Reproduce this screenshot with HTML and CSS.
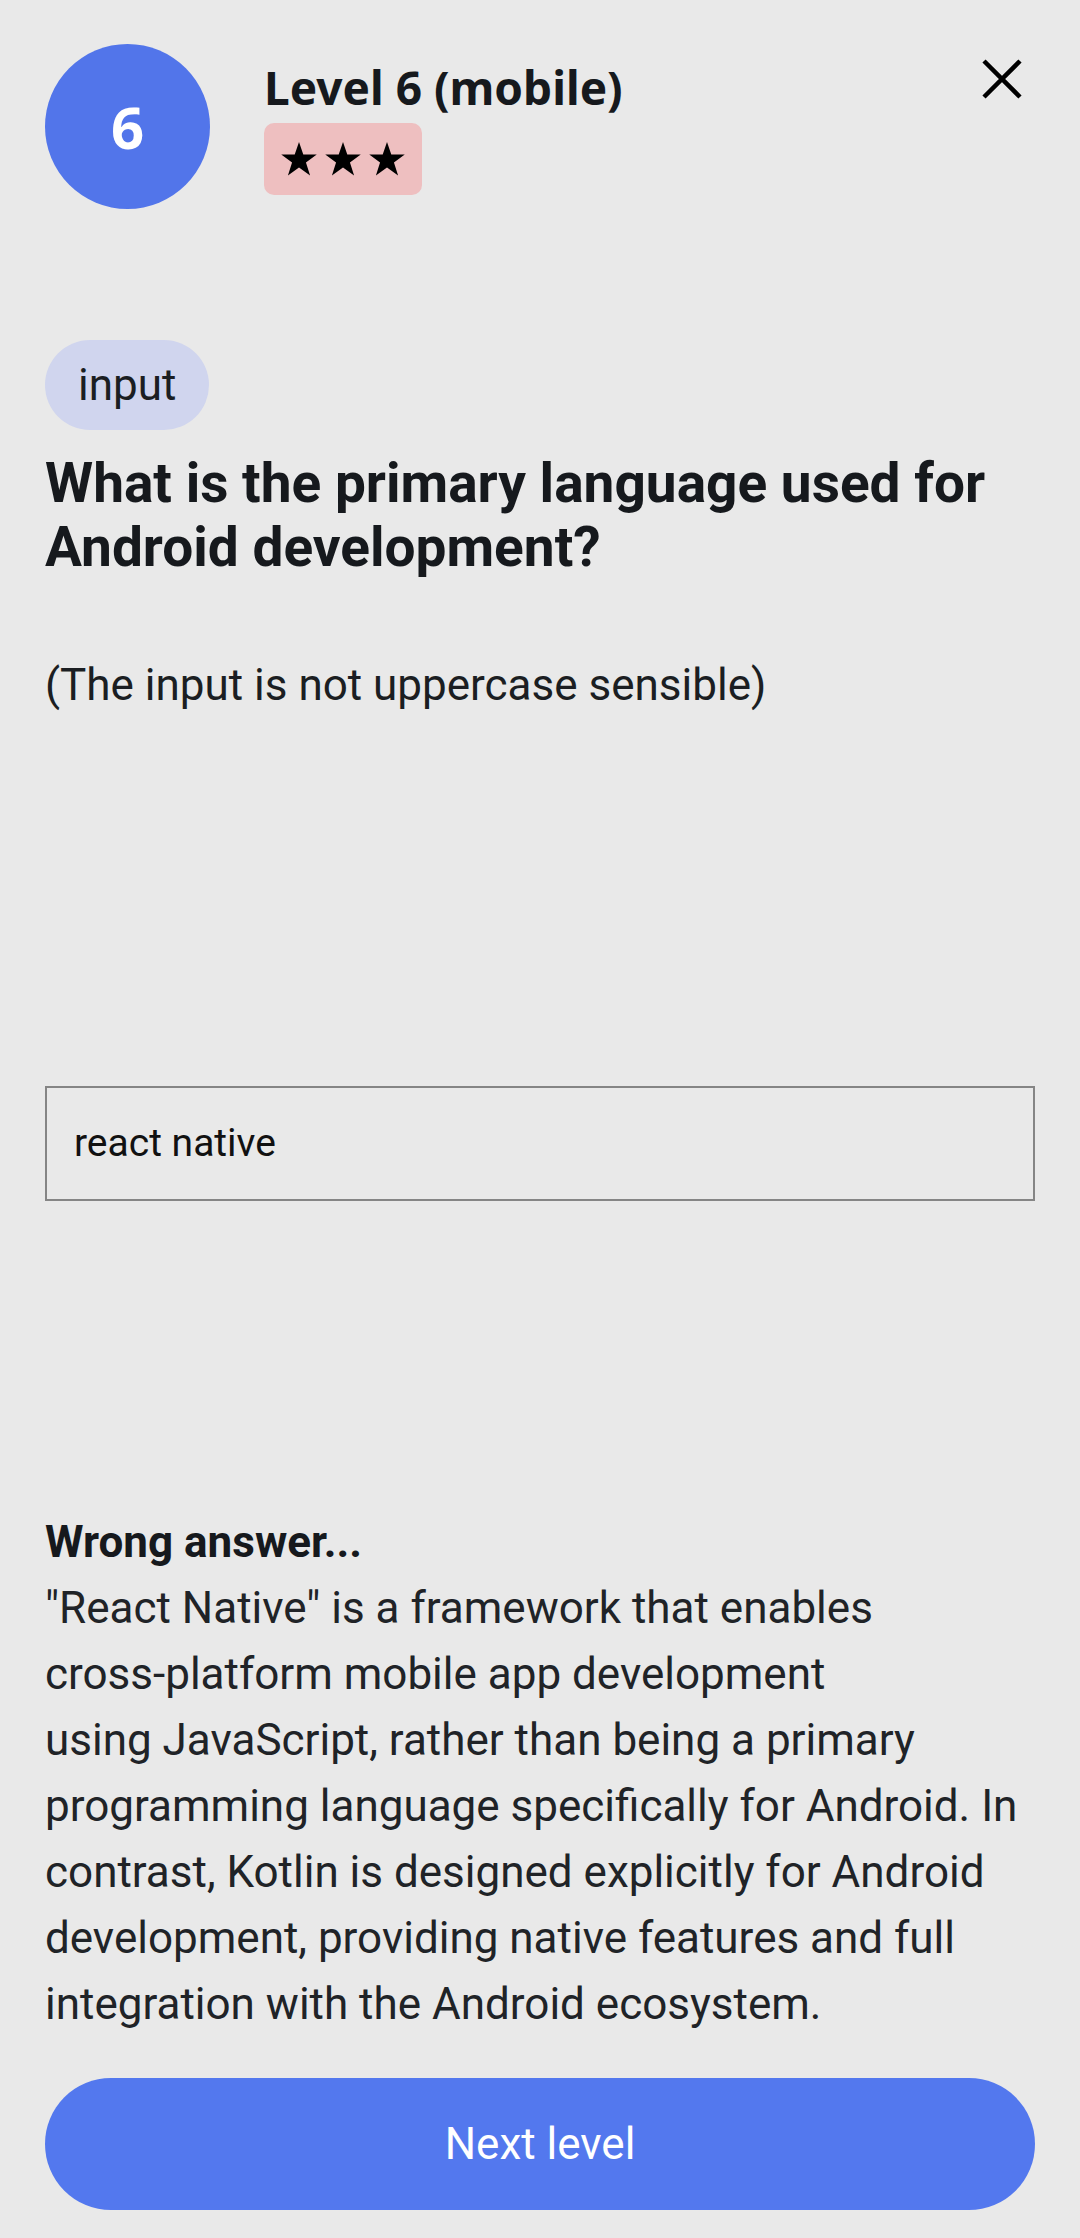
FILE: index.html
```html
<!DOCTYPE html>
<html lang="en">
<head>
    <meta charset="UTF-8">
    <meta name="viewport" content="width=device-width, initial-scale=1.0">
    <title>Level 6 (mobile)</title>
    <link rel="stylesheet" href="styles.css">
</head>
<body>

<div class="page">
    <header class="level-header">
        <div class="level-number">6</div>
        <div class="level-info">
            <h1>Level 6 (mobile)</h1>
            <div class="difficulty">
                <svg class="star" viewBox="0 0 24 23"><path d="M12 0l2.9 8.4H24l-7.3 5.4 2.8 8.8L12 17.2 4.5 22.6l2.8-8.8L0 8.4h9.1z"/></svg>
                <svg class="star" viewBox="0 0 24 23"><path d="M12 0l2.9 8.4H24l-7.3 5.4 2.8 8.8L12 17.2 4.5 22.6l2.8-8.8L0 8.4h9.1z"/></svg>
                <svg class="star" viewBox="0 0 24 23"><path d="M12 0l2.9 8.4H24l-7.3 5.4 2.8 8.8L12 17.2 4.5 22.6l2.8-8.8L0 8.4h9.1z"/></svg>
            </div>
        </div>
        <svg class="close" viewBox="0 0 40 40"><path d="M2 2L38 38M38 2L2 38"/></svg>
    </header>

    <section class="question">
        <span class="tag">input</span>
        <h2>What is the primary language used for Android development?</h2>
        <p class="hint">(The input is not uppercase sensible)</p>
        <div class="answer-box">react native</div>
    </section>

    <section class="feedback">
        <h3>Wrong answer...</h3>
        <p>
            "React Native" is a framework that enables<br>
            cross-platform mobile app development<br>
            using JavaScript, rather than being a primary<br>
            programming language specifically for Android. In<br>
            contrast, Kotlin is designed explicitly for Android<br>
            development, providing native features and full<br>
            integration with the Android ecosystem.
        </p>
    </section>

    <button class="next-btn">Next level</button>
</div>

</body>
</html>
```

FILE: styles.css
```css
body {
    font-family: Roboto, "Liberation Sans", sans-serif;
    margin: 0;
    padding: 0;
    background-color: #e9e9e9;
    color: #1b1e22;
}
.page {
    padding: 44px 45px 28px;
}
.level-header {
    display: flex;
    align-items: flex-start;
}
.level-number {
    width: 165px;
    height: 165px;
    border-radius: 50%;
    background-color: #5275ea;
    color: white;
    font-family: "Noto Sans", sans-serif;
    font-weight: bold;
    font-size: 58px;
    display: flex;
    align-items: center;
    justify-content: center;
    flex-shrink: 0;
}
.level-info {
    margin-left: 54px;
    margin-top: 16px;
}
h1 {
    margin: 0;
    font-family: "Noto Sans", sans-serif;
    font-size: 46px;
    line-height: 55px;
    font-weight: bold;
    color: #16191d;
}
.difficulty {
    display: inline-flex;
    gap: 8px;
    margin-top: 8px;
    padding: 19px 17px;
    background-color: #eebfc0;
    border-radius: 10px;
}
.star {
    width: 36px;
    height: 34px;
    fill: #000;
}
.close {
    width: 40px;
    height: 40px;
    margin-left: auto;
    margin-right: 13px;
    margin-top: 15px;
    stroke: #000;
    stroke-width: 4.5;
    fill: none;
}
.tag {
    display: inline-block;
    margin-top: 131px;
    height: 90px;
    line-height: 90px;
    padding: 0 33px;
    border-radius: 45px;
    background-color: #d0d5ee;
    font-size: 44px;
}
.question h2 {
    margin: 21px 0 0;
    font-size: 55px;
    line-height: 64px;
    font-weight: bold;
    color: #16191d;
}
.hint {
    margin: 81px 0 0;
    font-size: 44px;
    line-height: 50px;
}
.answer-box {
    margin-top: 376px;
    height: 111px;
    line-height: 111px;
    border: 2px solid #858585;
    padding-left: 27px;
    font-size: 39px;
    color: #111;
}
.feedback {
    margin-top: 308px;
    font-size: 44px;
    line-height: 66px;
    color: #202327;
}
.feedback h3 {
    margin: 0;
    font-size: 44px;
    font-weight: bold;
    color: #16191d;
}
.feedback p {
    margin: 0;
}
.next-btn {
    display: block;
    width: 100%;
    height: 132px;
    margin-top: 41px;
    border: none;
    border-radius: 66px;
    background-color: #5378ee;
    color: white;
    font-family: Roboto, sans-serif;
    font-size: 44px;
}
```
